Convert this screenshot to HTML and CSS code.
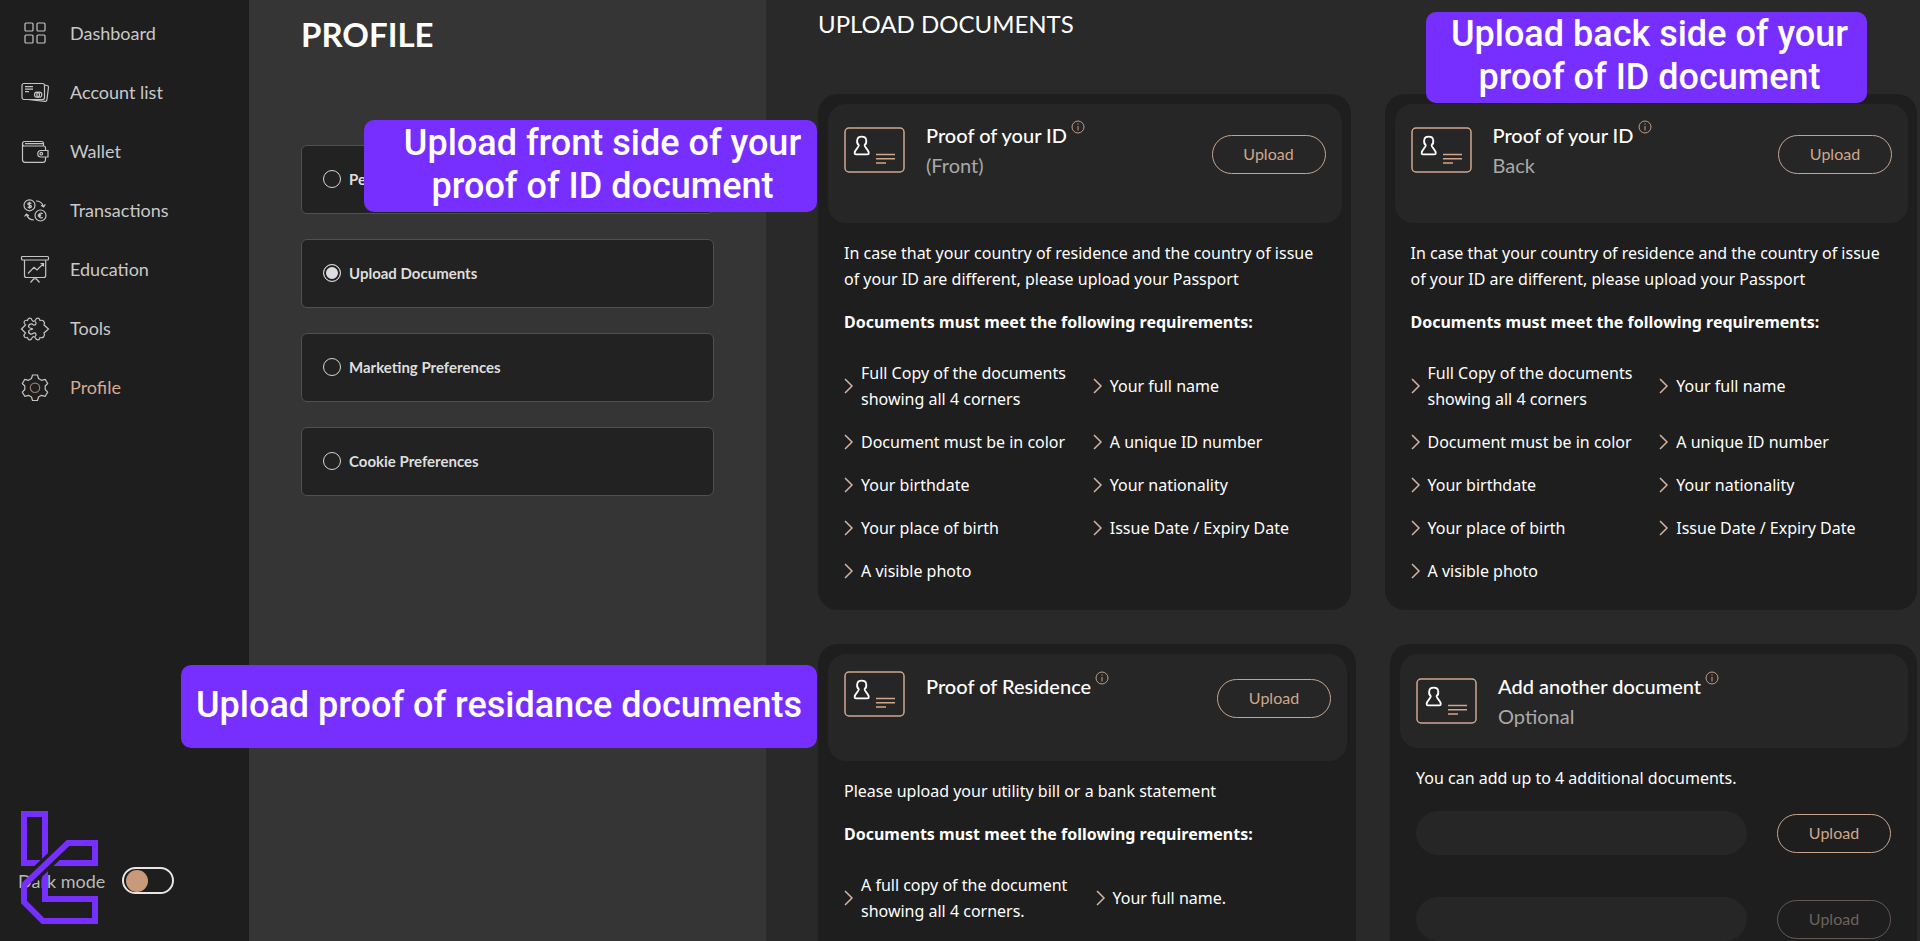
FILE: index.html
```html
<!DOCTYPE html>
<html lang="en">
<head>
<meta charset="utf-8">
<meta name="viewport" content="width=device-width, initial-scale=1">
<title>Profile - Upload Documents</title>
<link rel="stylesheet" href="styles.css">
</head>
<body>
<svg class="sprite" aria-hidden="true">
  <symbol id="chevron" viewBox="0 0 10 16"><path d="M1 1l7 7-7 7"/></symbol>
  <symbol id="info" viewBox="0 0 14 14"><circle cx="7" cy="7" r="6"/><path d="M7 6v4.500M7 3.400v1.200"/></symbol>
  <symbol id="idcard" viewBox="0 0 61 46">
    <rect x="1" y="1" width="59" height="44" rx="4" stroke="#d0a78c" stroke-width="1.500"/>
    <path d="M14.800 18.300C13 16.800 12.700 14.800 13.300 12.400c.8-3.600 8-3.600 8.800 0 .6 2.400.3 4.400-1.500 5.900 0 2 4.200 4.600 4.200 7.700 0 .9-.5 1.400-1.400 1.400H12c-.9 0-1.400-.5-1.400-1.400 0-3.100 4.200-5.700 4.200-7.700z" stroke="#fff" stroke-width="1.800"/>
    <path d="M32 27.500h19M32 31.800h19M32 36h10" stroke="#d0a78c" stroke-width="1.500"/>
  </symbol>
</svg>

<div class="app">
  <aside class="sidebar">
    <nav class="nav">
      <a class="nav-link" href="#"><svg class="nav-icon" viewBox="0 0 30 30"><rect x="5" y="5" width="8" height="8" rx="1"/><rect x="17" y="5" width="8" height="8" rx="1"/><rect x="5" y="17" width="8" height="8" rx="1"/><rect x="17" y="17" width="8" height="8" rx="1"/></svg>Dashboard</a>
      <a class="nav-link" href="#"><svg class="nav-icon" viewBox="0 0 30 30"><rect x="2" y="6.500" width="22.500" height="16" rx="2"/><path d="M24.500 8l2.600.5c1 .2 1.500.8 1.400 1.800l-1.600 12.500c-.2 1-.8 1.600-1.800 1.500L8 22.500M5 9.700h8M5 12.200h8M5 14.700h4"/><circle cx="17" cy="17.700" r="2.500"/><circle cx="19.300" cy="17.700" r="2.500"/></svg>Account list</a>
      <a class="nav-link" href="#"><svg class="nav-icon" viewBox="0 0 30 30"><path d="M25.500 14.500V12c0-1.200-.6-2-1.800-2H4.500C1.800 10 1.800 5.500 4.500 5.500h17c1.500 0 2 .8 2 2V10M2.500 7.500v16.300c0 1.700.8 2.500 2.500 2.500h18c1.700 0 2.500-.8 2.500-2.500V21M5 7.700h18"/><path d="M28 14.500h-7c-4.300 0-4.300 6.500 0 6.500h7z"/><circle cx="21.300" cy="17.700" r="1.300"/></svg>Wallet</a>
      <a class="nav-link" href="#"><svg class="nav-icon" viewBox="0 0 30 30"><circle cx="9.500" cy="10.300" r="5.500"/><circle cx="20.500" cy="20.500" r="5.500"/><path d="M16 6c3.800 0 6.300 2 7.500 5.500M21 10.300l2.600 1.600 1.700-2.500M14 25c-3.800 0-6.300-2-7.500-5.500M4.500 21.500l1.900-2.400 2.500 1.600"/><path stroke-width="1.300" d="M11.300 8.700c-.9-1.300-3.600-1-3.500.3.100 1.600 3.600.9 3.600 2.600 0 1.400-2.900 1.600-3.700.2M9.500 6.800v7M22.600 18.800c-1.600-1.500-3.600-.5-3.600 1.700s2 3.200 3.600 1.700M17.800 20h3.400M17.800 21.200h3"/></svg>Transactions</a>
      <a class="nav-link" href="#"><svg class="nav-icon" viewBox="0 0 30 30"><rect x="1.500" y="2.500" width="27" height="3.500" rx="1"/><path d="M4.500 6v15.500c0 1.200.6 2 1.800 2h17.400c1.200 0 2-.8 2-2V6M8 19.500l6-6.200 3 2.700 6-6M20.500 9.500H23.500V12.500M15 23.500v2M14 24.500l-3.500 4M16 24.500l3.500 4"/></svg>Education</a>
      <a class="nav-link" href="#"><svg class="nav-icon" viewBox="0 0 30 30"><path d="M1.500 16L5.500 12C2.500 9.500 4.500 6.500 7.500 7.500C8 4.500 11 4.500 12 7C13 9 14.500 8.500 15.500 7C16.500 4.500 19.500 4.500 20 7.500C23 6.500 25.500 9 24 12L28.500 16L24 20C25.500 23 23 25.500 20 24.500C19.500 27.500 16.500 27.500 15.500 25C14.500 23.500 13 23 12 25C11 27.500 8 27.500 7.500 24.500C4.500 25.500 2.500 22.500 5.500 20z"/><path d="M15 8.500C17 10 16 12.500 13.500 12C11 9.500 7.500 12 9 14.500C9.800 15.500 11.500 15 12.500 16C11.500 17 9.800 16.500 9 17.500C7.500 20 11 22.500 13.500 20C16 19.500 17 22 15 23.500"/></svg>Tools</a>
      <a class="nav-link nav-link-active" href="#" aria-current="page"><svg class="nav-icon" viewBox="0 0 30 30"><path d="M12.500 3h5l1 3.500 3 1.800 3.700-.9 2.500 4.100L25.200 14v3.500l2.500 2.600-2.500 4.200-3.700-1-3 1.700-1 3.500h-5l-1-3.500-3-1.700-3.700 1-2.500-4.200 2.500-2.600V14l-2.500-2.500 2.500-4.100 3.700.9 3-1.800z" stroke-linejoin="round"/><circle class="gear-hub" cx="15" cy="15.800" r="4.700"/></svg>Profile</a>
    </nav>
    <div class="mode">
      <label for="dark-mode">Dark mode</label>
      <input class="toggle" type="checkbox" id="dark-mode">
      <svg class="brand" viewBox="0 0 77 113" role="img" aria-label="Brand mark">
        <path d="M24 48V3H3v49h71M24 55v33"/>
        <path class="brand-gap" d="M40 38.700L10 67.300"/>
        <path d="M74 55V32H47L3 74v17l19 19h52V88H21"/>
      </svg>
    </div>
  </aside>

  <section class="profile">
    <h1 class="profile-title">PROFILE</h1>
    <form class="options">
      <label class="option"><input class="radio" type="radio" name="section">Personal Details</label>
      <label class="option"><input class="radio" type="radio" name="section" checked>Upload Documents</label>
      <label class="option"><input class="radio" type="radio" name="section">Marketing Preferences</label>
      <label class="option"><input class="radio" type="radio" name="section">Cookie Preferences</label>
    </form>
  </section>

  <main class="main">
    <h2 class="main-title">UPLOAD DOCUMENTS</h2>
    <div class="cards">
      <article class="card">
        <header class="card-head">
          <svg class="id-icon"><use href="#idcard"/></svg>
          <div class="card-names"><h3>Proof of your ID<svg class="info"><use href="#info"/></svg></h3><p>(Front)</p></div>
          <button class="upload" type="button">Upload</button>
        </header>
        <div class="card-body">
          <p class="note">In case that your country of residence and the country of issue of your ID are different, please upload your Passport</p>
          <p class="lead">Documents must meet the following requirements:</p>
          <ul class="reqs">
            <li><svg class="chev"><use href="#chevron"/></svg><span>Full Copy of the documents showing all 4 corners</span></li>
            <li><svg class="chev"><use href="#chevron"/></svg>Your full name</li>
            <li><svg class="chev"><use href="#chevron"/></svg>Document must be in color</li>
            <li><svg class="chev"><use href="#chevron"/></svg>A unique ID number</li>
            <li><svg class="chev"><use href="#chevron"/></svg>Your birthdate</li>
            <li><svg class="chev"><use href="#chevron"/></svg>Your nationality</li>
            <li><svg class="chev"><use href="#chevron"/></svg>Your place of birth</li>
            <li><svg class="chev"><use href="#chevron"/></svg>Issue Date / Expiry Date</li>
            <li><svg class="chev"><use href="#chevron"/></svg>A visible photo</li>
          </ul>
        </div>
      </article>

      <article class="card">
        <header class="card-head">
          <svg class="id-icon"><use href="#idcard"/></svg>
          <div class="card-names"><h3>Proof of your ID<svg class="info"><use href="#info"/></svg></h3><p>Back</p></div>
          <button class="upload" type="button">Upload</button>
        </header>
        <div class="card-body">
          <p class="note">In case that your country of residence and the country of issue of your ID are different, please upload your Passport</p>
          <p class="lead">Documents must meet the following requirements:</p>
          <ul class="reqs">
            <li><svg class="chev"><use href="#chevron"/></svg><span>Full Copy of the documents showing all 4 corners</span></li>
            <li><svg class="chev"><use href="#chevron"/></svg>Your full name</li>
            <li><svg class="chev"><use href="#chevron"/></svg>Document must be in color</li>
            <li><svg class="chev"><use href="#chevron"/></svg>A unique ID number</li>
            <li><svg class="chev"><use href="#chevron"/></svg>Your birthdate</li>
            <li><svg class="chev"><use href="#chevron"/></svg>Your nationality</li>
            <li><svg class="chev"><use href="#chevron"/></svg>Your place of birth</li>
            <li><svg class="chev"><use href="#chevron"/></svg>Issue Date / Expiry Date</li>
            <li><svg class="chev"><use href="#chevron"/></svg>A visible photo</li>
          </ul>
        </div>
      </article>
    </div>

    <div class="cards cards-uneven">
      <article class="card">
        <header class="card-head card-head-single">
          <svg class="id-icon"><use href="#idcard"/></svg>
          <div class="card-names"><h3>Proof of Residence<svg class="info"><use href="#info"/></svg></h3></div>
          <button class="upload" type="button">Upload</button>
        </header>
        <div class="card-body">
          <p class="note">Please upload your utility bill or a bank statement</p>
          <p class="lead">Documents must meet the following requirements:</p>
          <ul class="reqs">
            <li><svg class="chev"><use href="#chevron"/></svg><span>A full copy of the document showing all 4 corners.</span></li>
            <li><svg class="chev"><use href="#chevron"/></svg>Your full name.</li>
          </ul>
        </div>
      </article>

      <article class="card">
        <header class="card-head card-head-short">
          <svg class="id-icon"><use href="#idcard"/></svg>
          <div class="card-names"><h3>Add another document<svg class="info"><use href="#info"/></svg></h3><p>Optional</p></div>
        </header>
        <div class="card-body">
          <p class="note">You can add up to 4 additional documents.</p>
          <div class="extras">
            <div class="extra"><input class="field" type="text" aria-label="First additional document"><button class="upload" type="button">Upload</button></div>
            <div class="extra"><input class="field" type="text" aria-label="Second additional document"><button class="upload" type="button" disabled>Upload</button></div>
          </div>
        </div>
      </article>
    </div>
  </main>

  <div class="callout callout-front">Upload front side of your<br>proof of ID document</div>
  <div class="callout callout-back">Upload back side of your<br>proof of ID document</div>
  <div class="callout callout-residence">Upload proof of residance documents</div>
</div>
</body>
</html>
```
FILE: styles.css
```css
* { box-sizing: border-box; }

body {
  margin: 0;
  background: #292929;
  color: #fff;
  font-family: "Noto Sans", "Open Sans", sans-serif;
  font-size: 16px;
  line-height: 26px;
}

h1, h2, h3, p, ul { margin: 0; padding: 0; }

.sprite { position: absolute; width: 0; height: 0; }

.app {
  position: relative;
  display: flex;
  height: 100vh;
  overflow: hidden;
  font-family: Lato, sans-serif;
}

/* Sidebar */
.sidebar {
  display: flex;
  flex: 0 0 249px;
  flex-direction: column;
  justify-content: space-between;
  padding: 3px 18px 47px;
  background: #1e1e1e;
}

.nav { display: flex; flex-direction: column; }

.nav-link {
  display: flex;
  align-items: center;
  gap: 20px;
  height: 59px;
  padding-left: 2px;
  color: #c9c9c9;
  font-size: 18px;
  text-decoration: none;
}

.nav-link-active { color: #d6ab92; }

.nav-icon {
  width: 30px;
  height: 30px;
  fill: none;
  stroke: #c4c4c4;
  stroke-width: 1.2;
}

.gear-hub { stroke: #9a7d6c; }

.mode {
  position: relative;
  display: flex;
  align-items: center;
  gap: 17px;
  color: #b9b9b9;
  font-size: 18px;
}

.toggle {
  display: flex;
  align-items: center;
  width: 52px;
  height: 27px;
  margin: 0;
  padding: 0 2px;
  border: 2px solid #e6e6e6;
  border-radius: 14px;
  appearance: none;
}

.toggle::before {
  width: 22px;
  height: 22px;
  border-radius: 50%;
  background: #c99a79;
  content: "";
}

.brand {
  position: absolute;
  bottom: -30px;
  left: 3px;
  width: 77px;
  height: 113px;
  fill: none;
  stroke: #772fff;
  stroke-width: 6;
}

.brand-gap { stroke: #1e1e1e; stroke-width: 13; }

/* Profile sections */
.profile {
  flex: 0 0 517px;
  padding: 14px 52px;
  background: #353535;
}

.profile-title {
  font-size: 33px;
  font-weight: 700;
  line-height: 40px;
}

.options {
  display: flex;
  flex-direction: column;
  gap: 25px;
  margin-top: 91px;
}

.option {
  display: flex;
  align-items: center;
  gap: 8px;
  height: 69px;
  padding: 0 21px 2px;
  border: 1px solid #505050;
  border-radius: 6px;
  background: #222;
  color: #dedede;
  font-size: 15px;
  font-weight: 700;
}

.radio {
  width: 18px;
  height: 18px;
  margin: 0;
  border: 1px solid #d5d5d5;
  border-radius: 50%;
  appearance: none;
}

.radio:checked {
  background: #dcdce2;
  box-shadow: inset 0 0 0 2px #222;
}

/* Documents */
.main {
  flex: 1;
  min-width: 0;
  padding: 9px 3px 0 52px;
}

.main-title {
  margin-bottom: 55px;
  font-size: 24px;
  font-weight: 400;
  line-height: 30px;
}

.cards {
  display: grid;
  grid-template-columns: 1fr 1fr;
  gap: 34px;
  margin-bottom: 34px;
}

.cards-uneven { grid-template-columns: 538fr 527fr; }

.card {
  min-height: 340px;
  padding: 10px 9px 26px 10px;
  border-radius: 20px;
  background: #1e1e1e;
}

.card-head {
  display: flex;
  align-items: center;
  padding: 16px 16px 43px;
  border-radius: 18px;
  background: #262626;
}

.card-head-single { align-items: flex-start; padding: 17px 16px 43px; }
.card-head-short { padding: 17px 16px; }

.id-icon { flex: none; width: 61px; height: 46px; fill: none; }

.card-names {
  flex: 1;
  margin-left: 21px;
  font-size: 20px;
  line-height: 30px;
}

.card-names h3 { font-size: inherit; font-weight: 500; }
.card-names p { color: #a9a9a9; }

.info {
  width: 14px;
  height: 14px;
  margin: 0 0 9px 4px;
  fill: none;
  stroke: #c39c84;
  stroke-width: 1;
  vertical-align: baseline;
}

.upload {
  flex: none;
  width: 114px;
  height: 39px;
  padding: 0 0 2px;
  border: 1px solid #c9a48c;
  border-radius: 20px;
  background: none;
  color: #d0a78c;
  font: 16px Lato, sans-serif;
}

.card-head .upload { margin-top: 8px; }
.upload:disabled { border-color: #635850; color: #6e625a; }

.card-body {
  padding: 17px 0 0 16px;
  font-family: "Noto Sans", "Open Sans", sans-serif;
}

.note { padding-right: 16px; }
.lead { margin-top: 17px; font-weight: 700; }

.reqs {
  display: grid;
  grid-template-columns: 1fr 1fr;
  gap: 17px 0;
  margin-top: 25px;
  list-style: none;
}

.reqs li { display: flex; align-items: center; gap: 7px; }

.chev {
  flex: none;
  width: 10px;
  height: 16px;
  fill: none;
  stroke: #d3b3a2;
  stroke-width: 1.5;
}

.extras {
  display: flex;
  flex-direction: column;
  gap: 42px;
  margin-top: 20px;
  padding-right: 17px;
}

.extra { display: flex; align-items: center; gap: 30px; }

.field {
  flex: 1;
  min-width: 0;
  height: 44px;
  padding: 0 20px;
  border: 0;
  border-radius: 22px;
  background: #262626;
  color: #fff;
  font: inherit;
}

/* Annotations laid over the page */
.callout {
  position: absolute;
  display: flex;
  align-items: center;
  justify-content: center;
  padding-bottom: 3px;
  border-radius: 10px;
  background: #772fff;
  font-family: Roboto, sans-serif;
  font-size: 36px;
  font-weight: 500;
  line-height: 43px;
  text-align: center;
}

.callout-front { top: 120px; left: 364px; width: 453px; height: 92px; padding-left: 24px; }
.callout-back { top: 12px; left: 1426px; width: 441px; height: 91px; padding-left: 6px; }
.callout-residence { top: 665px; left: 181px; width: 636px; height: 83px; }
```
